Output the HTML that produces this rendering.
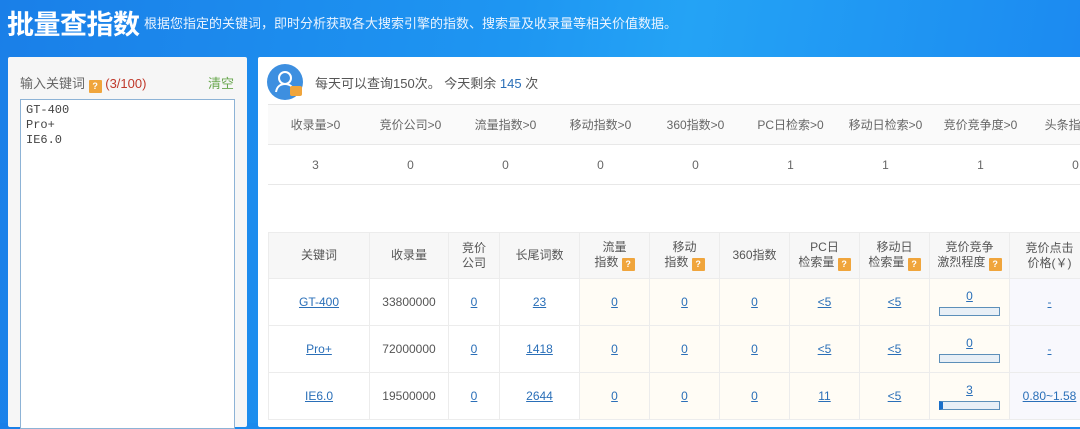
<!DOCTYPE html>
<html><head><meta charset="utf-8"><style>
*{margin:0;padding:0;box-sizing:border-box}
body{width:1080px;height:423px;overflow:hidden;background:linear-gradient(100deg,#1a7fe8 0%,#1e96f2 45%,#24a3f5 60%,#1a86f0 100%);font-family:"Liberation Sans","Noto Sans CJK SC",sans-serif;font-size:12px;color:#555;position:relative}
.a{position:absolute}
.t1{left:7px;top:3px;font-size:27px;font-weight:bold;color:#fff;letter-spacing:-0.5px}
.t2{left:144px;top:13px;font-size:13px;color:#eaf4ff}
.lp{left:8px;top:57px;width:239px;height:370px;background:#f6f6f6;border-radius:2px}
.rp{left:258px;top:57px;width:830px;height:370px;background:#fff;border-radius:2px}
.q{display:inline-block;width:13px;height:13px;background:#f0a53c;color:#fff;font-size:9px;line-height:13px;text-align:center;font-weight:bold;vertical-align:-1px;border-radius:1px}
.ta{left:20px;top:99px;width:215px;height:330px;background:#fff;border:1px solid #8db3d6;font-family:"Liberation Mono","Noto Sans CJK SC",monospace;font-size:12px;color:#444;padding:3px 5px;line-height:15px}
table{border-collapse:collapse;position:absolute;table-layout:fixed}
td{text-align:center;color:#555;font-size:12px;overflow:hidden;white-space:nowrap}
.s td{width:95px;height:40px;color:#666}
.s tr:first-child td{background:#fafafa}
.s{border-top:1px solid #e6e6e6}
.s tr{border-bottom:1px solid #e8e8e8}
.m td{border-right:1px solid #ececec;border-bottom:1px solid #ececec;height:47px;line-height:15px}
.m tr:first-child td{background:#f7f7f7;height:46px}
a{color:#2a6fb8;text-decoration:underline}
.c{background:#fffcf5}
.l{background:#f8f8fd}
.bar{display:block;margin:3px auto 0;width:61px;height:9px;border:1px solid #5c8fb9;background:#e8eff6}
</style></head><body>
<div class="a t1">批量查指数</div>
<div class="a t2">根据您指定的关键词，即时分析获取各大搜索引擎的指数、搜索量及收录量等相关价值数据。</div>
<div class="a lp"></div>
<div class="a" style="left:20px;top:73px;font-size:13px;color:#666">输入关键词 <span class="q">?</span> <span style="color:#c0392b">(3/100)</span></div>
<div class="a" style="left:208px;top:73px;font-size:13px;color:#6aa84f">清空</div>
<div class="a ta">GT-400<br>Pro+<br>IE6.0</div>
<div class="a rp"></div>
<div class="a" style="left:267px;top:64px;width:36px;height:36px;border-radius:50%;background:#3d8fe0"><svg width="36" height="36" viewBox="0 0 36 36"><circle cx="18" cy="14" r="6" fill="none" stroke="#fff" stroke-width="2"/><path d="M9 28c1-6 5-8 9-8s8 2 9 8" fill="none" stroke="#fff" stroke-width="2"/></svg></div>
<div class="a" style="left:290px;top:86px;width:12px;height:10px;background:#f0a53c;border-radius:2px"></div>
<div class="a" style="left:315px;top:73px;font-size:13px;color:#555">每天可以查询150次。 今天剩余 <span style="color:#2a6fb8">145</span> 次</div>
<table class="s" style="left:268px;top:104px;width:855px">
<tr><td>收录量&gt;0</td><td>竞价公司&gt;0</td><td>流量指数&gt;0</td><td>移动指数&gt;0</td><td>360指数&gt;0</td><td>PC日检索&gt;0</td><td>移动日检索&gt;0</td><td>竞价竞争度&gt;0</td><td>头条指数&gt;0</td></tr>
<tr><td>3</td><td>0</td><td>0</td><td>0</td><td>0</td><td>1</td><td>1</td><td>1</td><td>0</td></tr>
</table>
<table class="m" style="left:268px;top:232px;width:821px;border-top:1px solid #ececec;border-left:1px solid #ececec">
<colgroup><col style="width:101px"><col style="width:79px"><col style="width:51px"><col style="width:80px"><col style="width:70px"><col style="width:70px"><col style="width:70px"><col style="width:70px"><col style="width:70px"><col style="width:80px"><col style="width:80px"></colgroup>
<tr><td>关键词</td><td>收录量</td><td>竞价<br>公司</td><td>长尾词数</td><td>流量<br>指数 <span class="q">?</span></td><td>移动<br>指数 <span class="q">?</span></td><td>360指数</td><td>PC日<br>检索量 <span class="q">?</span></td><td>移动日<br>检索量 <span class="q">?</span></td><td>竞价竞争<br>激烈程度 <span class="q">?</span></td><td>竞价点击<br>价格(￥)</td></tr>
<tr><td><a>GT-400</a></td><td>33800000</td><td><a>0</a></td><td><a>23</a></td><td class="c"><a>0</a></td><td class="c"><a>0</a></td><td class="c"><a>0</a></td><td class="c"><a>&lt;5</a></td><td class="c"><a>&lt;5</a></td><td class="c"><a>0</a><span class="bar"></span></td><td class="l"><a>-</a></td></tr>
<tr><td><a>Pro+</a></td><td>72000000</td><td><a>0</a></td><td><a>1418</a></td><td class="c"><a>0</a></td><td class="c"><a>0</a></td><td class="c"><a>0</a></td><td class="c"><a>&lt;5</a></td><td class="c"><a>&lt;5</a></td><td class="c"><a>0</a><span class="bar"></span></td><td class="l"><a>-</a></td></tr>
<tr><td><a>IE6.0</a></td><td>19500000</td><td><a>0</a></td><td><a>2644</a></td><td class="c"><a>0</a></td><td class="c"><a>0</a></td><td class="c"><a>0</a></td><td class="c"><a>11</a></td><td class="c"><a>&lt;5</a></td><td class="c"><a>3</a><span class="bar" style="border-left:4px solid #1a6fc9"></span></td><td class="l"><a>0.80~1.58</a></td></tr>
</table>
</body></html>
